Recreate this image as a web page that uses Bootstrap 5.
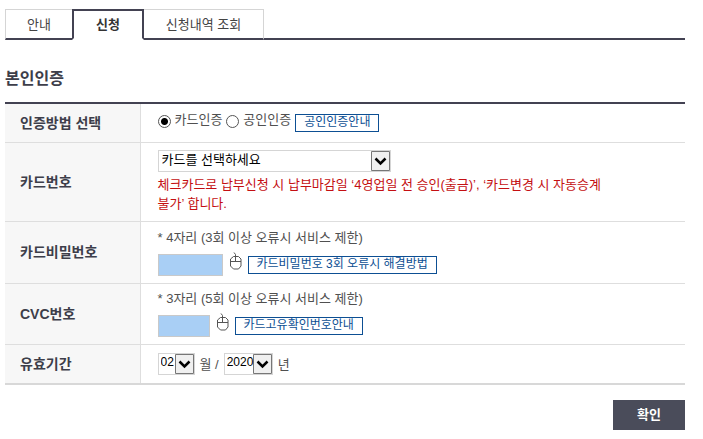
<!DOCTYPE html>
<html lang="ko">
<head>
<meta charset="utf-8">
<meta name="viewport" content="width=device-width, initial-scale=1">
<title>본인인증</title>
<link href="https://cdn.jsdelivr.net/npm/bootstrap@5.3.0/dist/css/bootstrap.min.css" rel="stylesheet">
<style>
body{font-family:"Liberation Sans","Noto Sans CJK KR",sans-serif;font-size:13px;line-height:19px;color:#505050;background:#fff}
.page{padding:9px 18px 9px 5px}
.nav-tabs.step-tabs{border-bottom:2px solid #434252}
.step-tabs .nav-link{height:31px;margin:0 0 -2px;padding:5px 22px 0;border:1px solid #d5d5d5;border-bottom:2px solid #434252;border-right:0;border-radius:0;color:#444;line-height:19px}
.step-tabs .nav-item:first-child .nav-link{padding-left:21px;padding-right:21px}
.step-tabs .nav-item:last-child .nav-link{border-left:0;border-right:1px solid #d5d5d5}
.step-tabs .nav-link.active{padding:4px 22px 0;border:2px solid #434252;border-bottom-color:#fff;color:#333;font-weight:700}
.page-title{margin:27px 0 12px;font-size:16px;line-height:23px;font-weight:700;color:#3d3e4a}
.auth-table{margin:0;border-top:2px solid #434252;border-bottom:2px solid #d8d8d8;color:#505050}
.auth-table th,.auth-table td{border:0;border-bottom:1px solid #dedede;vertical-align:middle}
.auth-table tr:last-child>*{border-bottom:0}
.auth-table th{width:135px;padding:0 15px;background:#f7f7f7;border-right:1px solid #dedede;font-size:14px;color:#3d3e4a}
.auth-table td{padding:8px 17px;background:#fff}
.auth-table .cell-pick{padding-top:6px;padding-bottom:10px}
.auth-table .cell-card{padding-top:7px}
.auth-table .cell-pass{padding-top:6px;padding-bottom:7px}
.auth-table .cell-cvc{padding-top:5px;padding-bottom:7px}
.warn{margin-top:3px;color:#c40f12}
.entry{gap:7px;margin-top:7px}
.radio-dot{appearance:none;width:13px;height:13px;margin:5px 4px 0 0;border:1px solid #555;border-radius:50%;background:#fff}
.radio-dot:checked{background:radial-gradient(circle,#000 0 3px,#fff 4px)}
.pick{appearance:none;height:22px;padding:0 20px 4px 3px;border:1px solid #d5d5d5;border-radius:0;color:#000;line-height:17px;background:#fff url("data:image/svg+xml,%3Csvg xmlns='http://www.w3.org/2000/svg' width='19' height='20'%3E%3Cpath fill='%23f0f0f0' stroke='%23777' d='M.5.5h18v19H.5z'/%3E%3Cpath fill='none' stroke='%23000' stroke-width='2.5' d='m4.5 7.5 5 5 5-5'/%3E%3C/svg%3E") right 0 center no-repeat}
.pick-card{width:233px}
.pick-month{width:37px;padding-left:2px;padding-right:0;font-size:12px}
.pick-year{width:49px;padding-left:2px;padding-right:0;font-size:12px}
.expiry{gap:5px}
.secret{height:22px;padding:0 4px;border:1px solid #c9c9c9;border-radius:0;background:#a9cff5}
.secret-pass{width:65px}
.secret-cvc{width:52px}
.mouse{width:12px;height:18px;margin-top:-8px;stroke:#555;fill:none}
.help-link{height:18px;padding:0 8px;border:1px solid #0d4f93;color:#0d4f93;font-size:12px;line-height:14px;text-decoration:none;margin-left:-1px}
.confirm{width:72px;height:30px;margin-top:15px;padding:0;border:0;border-radius:0;background:#4a4c5a;color:#fff;font-size:13px;line-height:28px;font-weight:700}
.confirm:hover{background:#434252;color:#fff}
</style>
</head>
<body>
<main class="page">
  <ul class="nav nav-tabs step-tabs">
    <li class="nav-item"><a class="nav-link" href="#">안내</a></li>
    <li class="nav-item"><a class="nav-link active" aria-current="page" href="#">신청</a></li>
    <li class="nav-item"><a class="nav-link" href="#">신청내역 조회</a></li>
  </ul>
  <h1 class="page-title">본인인증</h1>
  <form>
    <table class="table auth-table">
      <tbody>
        <tr>
          <th scope="row">인증방법 선택</th>
          <td class="cell-pick">
            <div class="d-flex align-items-start">
              <input class="radio-dot" type="radio" name="method" id="m-card" checked><label class="me-1" for="m-card">카드인증</label>
              <input class="radio-dot" type="radio" name="method" id="m-cert"><label class="me-1" for="m-cert">공인인증</label>
              <a class="help-link mt-1 ms-0" href="#">공인인증안내</a>
            </div>
          </td>
        </tr>
        <tr>
          <th scope="row"><label for="card">카드번호</label></th>
          <td class="cell-card">
            <select class="pick pick-card d-block" id="card"><option>카드를 선택하세요</option></select>
            <div class="warn">체크카드로 납부신청 시 납부마감일 ‘4영업일 전 승인(출금)’, ‘카드변경 시 자동승계<br>불가’ 합니다.</div>
          </td>
        </tr>
        <tr>
          <th scope="row"><label for="pass">카드비밀번호</label></th>
          <td class="cell-pass">
            <div>* 4자리 (3회 이상 오류시 서비스 제한)</div>
            <div class="d-flex align-items-center entry">
              <input class="secret secret-pass" type="password" id="pass" maxlength="4">
              <svg class="mouse" viewBox="0 0 12 18" aria-hidden="true"><path d="M5.500 5V2.500L4 .5M3.500 4.500h5l2.500 2.500v7l-2.500 3h-5L.5 14V7zM.5 9.500H11M5.500 4.500v5"/></svg>
              <a class="help-link" href="#">카드비밀번호 3회 오류시 해결방법</a>
            </div>
          </td>
        </tr>
        <tr>
          <th scope="row"><label for="cvc">CVC번호</label></th>
          <td class="cell-cvc">
            <div>* 3자리 (5회 이상 오류시 서비스 제한)</div>
            <div class="d-flex align-items-center entry">
              <input class="secret secret-cvc" type="password" id="cvc" maxlength="3">
              <svg class="mouse" viewBox="0 0 12 18" aria-hidden="true"><path d="M5.500 5V2.500L4 .5M3.500 4.500h5l2.500 2.500v7l-2.500 3h-5L.5 14V7zM.5 9.500H11M5.500 4.500v5"/></svg>
              <a class="help-link" href="#">카드고유확인번호안내</a>
            </div>
          </td>
        </tr>
        <tr>
          <th scope="row">유효기간</th>
          <td>
            <div class="d-flex align-items-center expiry">
              <select class="pick pick-month" id="month"><option>02</option></select>
              <label for="month">월 /</label>
              <select class="pick pick-year" id="year"><option>2020</option></select>
              <label for="year">년</label>
            </div>
          </td>
        </tr>
      </tbody>
    </table>
    <div class="d-flex justify-content-end"><button class="btn confirm" type="submit">확인</button></div>
  </form>
</main>
<script src="https://cdn.jsdelivr.net/npm/bootstrap@5.3.0/dist/js/bootstrap.bundle.min.js"></script>
</body>
</html>
